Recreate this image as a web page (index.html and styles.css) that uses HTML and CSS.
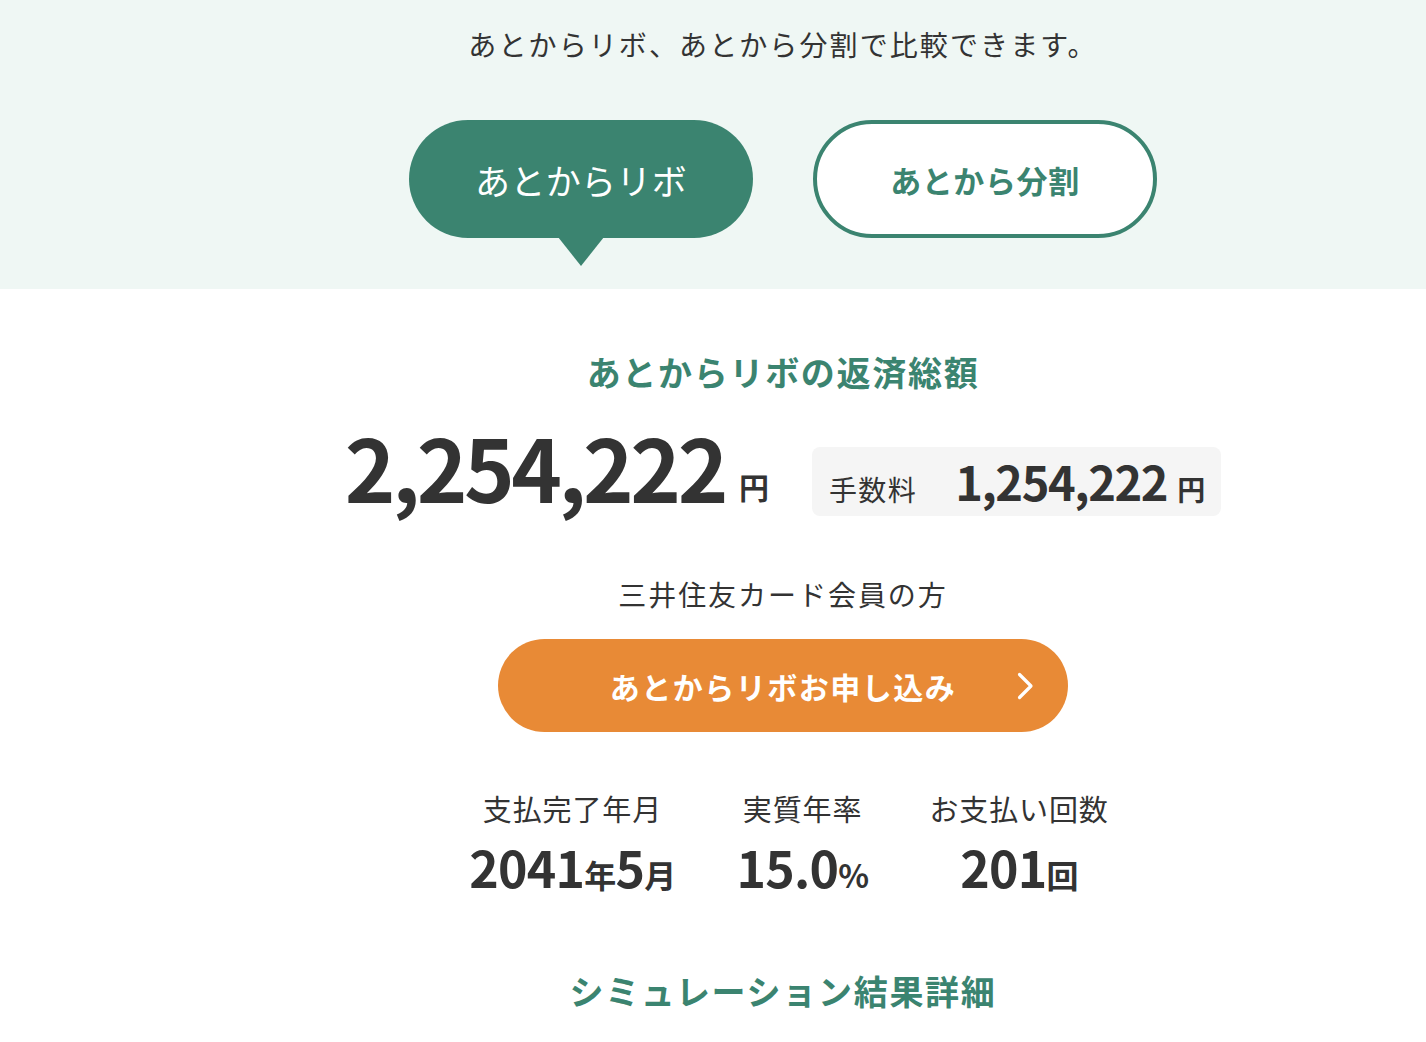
FILE: index.html
```html
<!DOCTYPE html>
<html lang="ja">
<head>
<meta charset="utf-8">
<title>シミュレーション</title>
<link rel="stylesheet" href="styles.css">
</head>
<body>
<section class="band">
  <div class="inner">
    <p class="lead">あとからリボ、あとから分割で比較できます。</p>
    <div class="tabs">
      <div class="tab tab-active">あとからリボ</div>
      <div class="tab tab-off">あとから分割</div>
    </div>
  </div>
</section>
<main class="main">
  <div class="inner">
    <h2 class="heading">あとからリボの返済総額</h2>
    <div class="totals">
      <div class="total"><span class="total-num">2,254,222</span><span class="total-unit">円</span></div>
      <div class="fee"><span class="fee-label">手数料</span><span class="fee-num">1,254,222</span><span class="fee-unit">円</span></div>
    </div>
    <p class="member">三井住友カード会員の方</p>
    <a class="apply" href="#">
      <span class="apply-text">あとからリボお申し込み</span>
      <svg class="apply-arrow" width="18" height="28" viewBox="0 0 18 28"><path d="M2.5 2.5 L14 14 L2.5 25.5" fill="none" stroke="#fff" stroke-width="3.2" stroke-linecap="round" stroke-linejoin="round"/></svg>
    </a>
    <div class="stats">
      <div class="stat">
        <div class="stat-label">支払完了年月</div>
        <div class="stat-value">2041<small>年</small>5<small>月</small></div>
      </div>
      <div class="stat">
        <div class="stat-label">実質年率</div>
        <div class="stat-value">15.0<small>%</small></div>
      </div>
      <div class="stat">
        <div class="stat-label">お支払い回数</div>
        <div class="stat-value">201<small>回</small></div>
      </div>
    </div>
    <h2 class="heading heading-2">シミュレーション結果詳細</h2>
  </div>
</main>
</body>
</html>
```
FILE: styles.css
```css
* { box-sizing: border-box; }
html, body { margin: 0; padding: 0; }
body {
  font-family: "Noto Sans CJK JP", "Noto Sans", sans-serif;
  color: #333;
  background: #fff;
}
.inner {
  margin-left: 140px;
  display: flex;
  flex-direction: column;
  align-items: center;
}
.band {
  background: #eff7f4;
  height: 289px;
}
.lead {
  margin: 22px 0 0;
  font-size: 28px;
  line-height: 44px;
  letter-spacing: 2.1px;
}
.tabs {
  display: flex;
  gap: 60px;
  margin-top: 54px;
}
.tab {
  width: 344px;
  height: 118px;
  border-radius: 59px / 59px;
  display: flex;
  align-items: center;
  justify-content: center;
  position: relative;
}
.tab-active {
  background: #3b8470;
  color: #fff;
  font-size: 35px;
  letter-spacing: 0.01em;
}
.tab-active::after {
  content: "";
  position: absolute;
  left: 149px;
  top: 117px;
  border-left: 23px solid transparent;
  border-right: 23px solid transparent;
  border-top: 29px solid #3b8470;
}
.tab-off {
  background: #fff;
  border: 4px solid #3b8470;
  color: #3b8470;
  font-size: 31px;
  font-weight: 700;
  letter-spacing: 0.02em;
}
.main {
  padding-top: 58px;
  padding-bottom: 40px;
}
.heading {
  margin: 0;
  font-size: 34px;
  line-height: 50px;
  font-weight: 700;
  color: #3b8470;
  letter-spacing: 0.05em;
}
.totals {
  display: flex;
  align-items: flex-end;
  gap: 43px;
  margin-top: 19px;
}
.total {
  display: flex;
  align-items: baseline;
  gap: 14px;
}
.total-num {
  font-size: 86px;
  font-weight: 700;
  line-height: 100px;
  letter-spacing: -0.04em;
}
.total-unit {
  font-size: 30px;
  font-weight: 700;
  position: relative;
  top: -4px;
}
.fee {
  background: #f5f5f5;
  border-radius: 8px;
  height: 69px;
  padding: 7px 16px 0 17px;
  display: flex;
  align-items: baseline;
}
.fee-label {
  font-size: 28px;
  margin-right: 38px;
  letter-spacing: 0.05em;
}
.fee-num {
  font-size: 47px;
  font-weight: 700;
  line-height: 54px;
  letter-spacing: -0.03em;
}
.fee-unit {
  font-size: 28px;
  font-weight: 700;
  margin-left: 10px;
}
.member {
  margin: 58px 0 0;
  font-size: 28px;
  line-height: 40px;
  letter-spacing: 0.07em;
}
.apply {
  margin-top: 25px;
  width: 570px;
  height: 93px;
  border-radius: 47px;
  background: #e88a36;
  display: flex;
  align-items: center;
  justify-content: center;
  position: relative;
  text-decoration: none;
  color: #fff;
}
.apply-text {
  font-size: 30px;
  font-weight: 700;
  letter-spacing: 0.05em;
}
.apply-arrow {
  position: absolute;
  right: 33px;
  top: 33px;
}
.stats {
  display: flex;
  gap: 61px;
  margin-top: 56px;
  margin-left: 12px;
}
.stat {
  display: flex;
  flex-direction: column;
  align-items: center;
}
.stat-label {
  font-size: 29px;
  line-height: 40px;
  letter-spacing: 0.03em;
}
.stat-value {
  font-size: 50px;
  font-weight: 700;
  line-height: 64px;
  margin-top: 6px;
  letter-spacing: -0.015em;
}
.stat-value small {
  font-size: 32px;
}
.heading-2 {
  margin-top: 60px;
}
```
